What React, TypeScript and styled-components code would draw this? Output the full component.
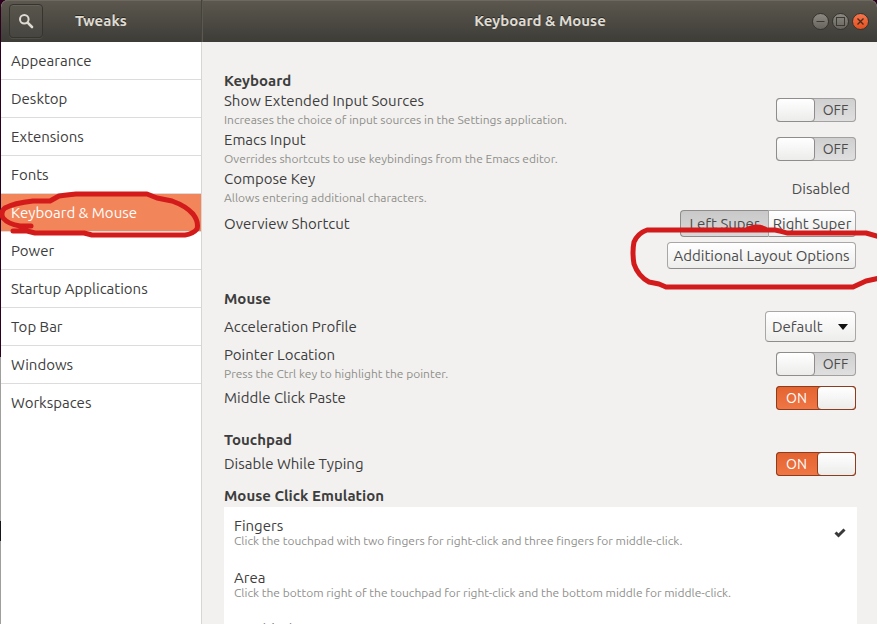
import React, { useState } from "react";
import styled, { createGlobalStyle, css } from "styled-components";

const GlobalStyle = createGlobalStyle`
  *, *::before, *::after { box-sizing: border-box; }
  html, body { margin: 0; padding: 0; background: #2c001e; }
  body, button, input, select {
    font-family: "Ubuntu", "Noto Sans", sans-serif;
    font-size: 15px;
    color: #3d3d3d;
  }
  h1, h2, p, ul { margin: 0; padding: 0; }
  ul { list-style: none; }
`;

const Desktop = styled.div`
  height: 100vh;
  padding-left: 1px;
  overflow: hidden;
  background: linear-gradient(#2c001e 0 357px, #a09f9e 357px 521px, #16161a 521px 541px, #a09f9e 541px);
`;

const Window = styled.div`
  display: flex;
  flex-direction: column;
  height: 100%;
  border-radius: 7px 7px 0 0;
  background: #f2f1f0;
`;

const TitleBar = styled.header`
  display: flex;
  flex: none;
  height: 42px;
  border-radius: 7px 7px 0 0;
  background: linear-gradient(#5c584f, #3d3c37);
  box-shadow: inset 0 1px #6d6960;
`;

const TitleSide = styled.div`
  position: relative;
  display: flex;
  align-items: center;
  width: 201px;
  padding-left: 8px;
  border-right: 1px solid #45433d;
`;

const TitleMain = styled.div`
  position: relative;
  display: flex;
  flex: 1;
  align-items: center;
  justify-content: flex-end;
  gap: 3px;
  padding-right: 8px;
  border-left: 1px solid #5b5850;
`;

const Title = styled.h1`
  position: absolute;
  inset: 0;
  font-size: 15px;
  font-weight: 700;
  line-height: 42px;
  text-align: center;
  color: #dfdbd2;
  text-shadow: 0 -1px rgba(0, 0, 0, 0.5);
  pointer-events: none;
`;

const SearchButton = styled.button`
  display: flex;
  align-items: center;
  justify-content: center;
  width: 34px;
  height: 34px;
  padding: 0;
  border: 1px solid #36342f;
  border-radius: 4px;
  background: linear-gradient(#58554c, #474540);
  box-shadow: inset 0 1px rgba(255, 255, 255, 0.07), 0 1px rgba(255, 255, 255, 0.08);
`;

const WindowButton = styled.button<{ $close?: boolean }>`
  display: flex;
  width: 17px;
  height: 17px;
  padding: 0;
  border: 1px solid #35332e;
  border-radius: 50%;
  background: ${(p) => (p.$close ? "linear-gradient(#f4764e, #e2501f)" : "linear-gradient(#8b8982, #66645d)")};
`;

const Body = styled.div`
  display: flex;
  flex: 1;
  min-height: 0;
`;

const Sidebar = styled.nav`
  flex: none;
  width: 201px;
  background: #fff;
  border-right: 1px solid #d8d6d4;
`;

const NavItem = styled.li`
  position: relative;
  border-bottom: 1px solid #dcdcdc;
  &:last-child { border-bottom: 0; }
`;

const NavLink = styled.a<{ $active: boolean }>`
  display: block;
  padding: 1px 10px 0;
  line-height: 36px;
  text-decoration: none;
  color: ${(p) => (p.$active ? "#fff" : "#3d3d3d")};
  background: ${(p) => (p.$active ? "#f28559" : "transparent")};
`;

const markStyle = css`
  position: absolute;
  z-index: 1;
  fill: none;
  stroke: #d31b1b;
  stroke-width: 5;
  stroke-linecap: round;
  stroke-linejoin: round;
  pointer-events: none;
`;

const NavMark = styled.svg`
  ${markStyle}
  left: -1px;
  top: -4px;
`;

const OptionsMark = styled.svg`
  ${markStyle}
  right: -24px;
  top: -18px;
`;

const Main = styled.main`
  flex: 1;
  min-width: 0;
  overflow: hidden;
  padding: 29px 21px 0 22px;
`;

const Section = styled.section`
  margin-bottom: 18px;
`;

const Heading = styled.h2`
  font-size: 15px;
  font-weight: 700;
  line-height: 20px;
`;

const EmulationHeading = styled(Heading)`
  margin: -10px 0 1px;
`;

const Row = styled.div<{ $end?: boolean }>`
  position: relative;
  display: flex;
  align-items: center;
  justify-content: ${(p) => (p.$end ? "flex-end" : "space-between")};
  padding: 2px 0;
`;

const TallRow = styled(Row)`
  padding: 2px 0 3px;
`;

const DetailRow = styled(Row)`
  padding: 0 0 1px;
`;

const Label = styled.label`
  display: block;
  line-height: 20px;
`;

const Hint = styled.p`
  font-size: 12px;
  line-height: 18px;
  color: #8f8f88;
`;

const SwitchBox = styled.span<{ $on: boolean }>`
  position: relative;
  display: flex;
  flex: none;
  flex-direction: ${(p) => (p.$on ? "row-reverse" : "row")};
  width: 80px;
  height: 24px;
  border-radius: 4px;
  line-height: 24px;
  text-align: center;
  color: ${(p) => (p.$on ? "#fff" : "#4c4c4c")};
  background: ${(p) => (p.$on ? "linear-gradient(#e3632f, #f07746)" : "linear-gradient(#cfcfcf, #e0e0e0)")};
  box-shadow: inset 0 0 0 1px ${(p) => (p.$on ? "#8b3d20" : "#a3a19f")};
`;

const SwitchInput = styled.input`
  position: absolute;
  inset: 0;
  width: 100%;
  height: 100%;
  margin: 0;
  opacity: 0;
`;

const Knob = styled.span<{ $on: boolean }>`
  width: 39px;
  border: 1px solid ${(p) => (p.$on ? "#8b3d20" : "#8f8d8b")};
  border-radius: 4px;
  background: linear-gradient(#fff, #ececeb);
`;

const SwitchText = styled.span`
  flex: 1;
  font-size: 14px;
`;

const buttonFace = css`
  border: 1px solid #a9a7a5;
  border-bottom-color: #8f8d8b;
  border-radius: 4px;
  background: linear-gradient(#fff, #ededec);
  color: #4c4c4c;
`;

const Button = styled.button`
  ${buttonFace}
  height: 27px;
  min-width: 189px;
  padding: 0 5px;
  line-height: 25px;
  white-space: nowrap;
`;

const Segments = styled.div`
  display: flex;
`;

const Segment = styled.button<{ $pressed: boolean }>`
  ${buttonFace}
  width: 88px;
  height: 27px;
  padding: 0;
  line-height: 25px;
  white-space: nowrap;
  &:first-child { border-radius: 4px 0 0 4px; border-right: 0; }
  &:last-child { border-radius: 0 4px 4px 0; }
  ${(p) =>
    p.$pressed &&
    css`
      background: linear-gradient(#c9c9c9, #d8d8d8);
      border-color: #8f8d8b;
    `}
`;

const FlatButton = styled.button`
  padding: 0 6px;
  border: 0;
  background: none;
  color: #4c4c4c;
`;

const SelectBox = styled.span`
  position: relative;
  display: flex;
`;

const Select = styled.select`
  ${buttonFace}
  appearance: none;
  width: 91px;
  height: 31px;
  padding: 0 24px 0 6px;
`;

const Arrow = styled.svg`
  position: absolute;
  right: 8px;
  top: 13px;
  pointer-events: none;
`;

const List = styled.ul`
  margin-right: -1px;
  background: #fff;
`;

const Choice = styled.li`
  display: flex;
  align-items: center;
  justify-content: space-between;
  padding: 11px 10px;
`;

const ChoiceName = styled.div`
  line-height: 16px;
`;

const ChoiceHint = styled.p`
  font-size: 12px;
  line-height: 14px;
  color: #8f8f8c;
`;

const Check = styled.svg`
  flex: none;
  margin-right: 1px;
`;

const pages = [
  "Appearance",
  "Desktop",
  "Extensions",
  "Fonts",
  "Keyboard & Mouse",
  "Power",
  "Startup Applications",
  "Top Bar",
  "Windows",
  "Workspaces",
];

const choices = [
  { name: "Fingers", hint: "Click the touchpad with two fingers for right-click and three fingers for middle-click." },
  { name: "Area", hint: "Click the bottom right of the touchpad for right-click and the bottom middle for middle-click." },
  { name: "Disabled", hint: "Don't use mouse click emulation." },
];

function Switch({ id, initial = false }: { id: string; initial?: boolean }) {
  const [on, setOn] = useState(initial);
  return (
    <SwitchBox $on={on}>
      <Knob $on={on} />
      <SwitchText>{on ? "ON" : "OFF"}</SwitchText>
      <SwitchInput id={id} type="checkbox" role="switch" checked={on} onChange={() => setOn(!on)} />
    </SwitchBox>
  );
}

function SwitchRow({ id, label, hint, initial }: { id: string; label: string; hint?: string; initial?: boolean }) {
  const Wrapper = hint ? DetailRow : Row;
  return (
    <Wrapper>
      <div>
        <Label htmlFor={id}>{label}</Label>
        {hint && <Hint>{hint}</Hint>}
      </div>
      <Switch id={id} initial={initial} />
    </Wrapper>
  );
}

export default function App() {
  const [page, setPage] = useState("Keyboard & Mouse");
  const [side, setSide] = useState("Left Super");
  return (
    <>
      <GlobalStyle />
      <Desktop>
        <Window>
          <TitleBar>
            <TitleSide>
              <SearchButton aria-label="Search">
                <svg width="16" height="16" viewBox="0 0 16 16" fill="none" stroke="#dfdbd2">
                  <circle cx="6.3" cy="6.3" r="4.3" strokeWidth="2" />
                  <path d="M9.6 9.6L14 14" strokeWidth="2.6" strokeLinecap="round" />
                </svg>
              </SearchButton>
              <Title>Tweaks</Title>
            </TitleSide>
            <TitleMain>
              <Title as="div">Keyboard &amp; Mouse</Title>
              <WindowButton aria-label="Minimize">
                <svg width="15" height="15" stroke="#3b3934"><path d="M3.5 7.5H11.5" /></svg>
              </WindowButton>
              <WindowButton aria-label="Maximize">
                <svg width="15" height="15" stroke="#3b3934" fill="none"><rect x="3.5" y="3.5" width="8" height="8" /></svg>
              </WindowButton>
              <WindowButton $close aria-label="Close">
                <svg width="15" height="15" stroke="#4a2a1b" strokeWidth="1.4"><path d="M4.5 4.5L10.5 10.5M10.5 4.5L4.5 10.5" /></svg>
              </WindowButton>
            </TitleMain>
          </TitleBar>
          <Body>
            <Sidebar>
              <ul>
                {pages.map((name) => (
                  <NavItem key={name}>
                    <NavLink href="#" $active={name === page} onClick={() => setPage(name)}>
                      {name}
                    </NavLink>
                    {name === "Keyboard & Mouse" && (
                      <NavMark width="204" height="50" viewBox="0 190 204 50" aria-hidden="true">
                        <path d="M31 226L20 226Q8 224 3 218Q0 212 5 208Q14 203 33 201L50 201L59 196Q66 195 76 194L147 194L157 198L172 201Q186 206 193 214Q199 222 197 229Q193 234 185 235L92 235L84 233L35 233L27 231L13 231" />
                      </NavMark>
                    )}
                  </NavItem>
                ))}
              </ul>
            </Sidebar>
            <Main>
              <Section>
                <Heading>Keyboard</Heading>
                <SwitchRow
                  id="sources"
                  label="Show Extended Input Sources"
                  hint="Increases the choice of input sources in the Settings application."
                />
                <SwitchRow
                  id="emacs"
                  label="Emacs Input"
                  hint="Overrides shortcuts to use keybindings from the Emacs editor."
                />
                <DetailRow>
                  <div>
                    <Label htmlFor="compose">Compose Key</Label>
                    <Hint>Allows entering additional characters.</Hint>
                  </div>
                  <FlatButton id="compose">Disabled</FlatButton>
                </DetailRow>
                <TallRow>
                  <Label as="span" id="overview">Overview Shortcut</Label>
                  <Segments role="group" aria-labelledby="overview">
                    {["Left Super", "Right Super"].map((name) => (
                      <Segment key={name} $pressed={name === side} aria-pressed={name === side} onClick={() => setSide(name)}>
                        {name}
                      </Segment>
                    ))}
                  </Segments>
                </TallRow>
                <Row $end>
                  <Button>Additional Layout Options</Button>
                  <OptionsMark width="256" height="72" viewBox="624 222 256 72" aria-hidden="true">
                    <path d="M880 237L866 233L787 233Q781 231 775 230L647 230Q638 233 634 242Q632 252 634 264Q638 276 649 282L659 284L666 287L853 287L866 281L880 278M748 229Q757 225 765 229" />
                  </OptionsMark>
                </Row>
              </Section>
              <Section>
                <Heading>Mouse</Heading>
                <TallRow>
                  <Label htmlFor="profile">Acceleration Profile</Label>
                  <SelectBox>
                    <Select id="profile" defaultValue="Default">
                      <option>Default</option>
                      <option>Flat</option>
                      <option>Adaptive</option>
                    </Select>
                    <Arrow width="10" height="6"><path d="M0 0H10L5 6Z" fill="#111" /></Arrow>
                  </SelectBox>
                </TallRow>
                <SwitchRow id="pointer" label="Pointer Location" hint="Press the Ctrl key to highlight the pointer." />
                <SwitchRow id="paste" label="Middle Click Paste" initial />
              </Section>
              <Section>
                <Heading>Touchpad</Heading>
                <SwitchRow id="typing" label="Disable While Typing" initial />
              </Section>
              <EmulationHeading>Mouse Click Emulation</EmulationHeading>
              <List>
                {choices.map(({ name, hint }) => (
                  <Choice key={name}>
                    <div>
                      <ChoiceName>{name}</ChoiceName>
                      <ChoiceHint>{hint}</ChoiceHint>
                    </div>
                    {name === "Fingers" && (
                      <Check width="12" height="10" viewBox="0 0 12 10" fill="none" stroke="#3a3a3a" strokeWidth="3" role="img" aria-label="Selected">
                        <path d="M1.5 4.5L4.5 7.5L10.5 1.5" />
                      </Check>
                    )}
                  </Choice>
                ))}
              </List>
            </Main>
          </Body>
        </Window>
      </Desktop>
    </>
  );
}
